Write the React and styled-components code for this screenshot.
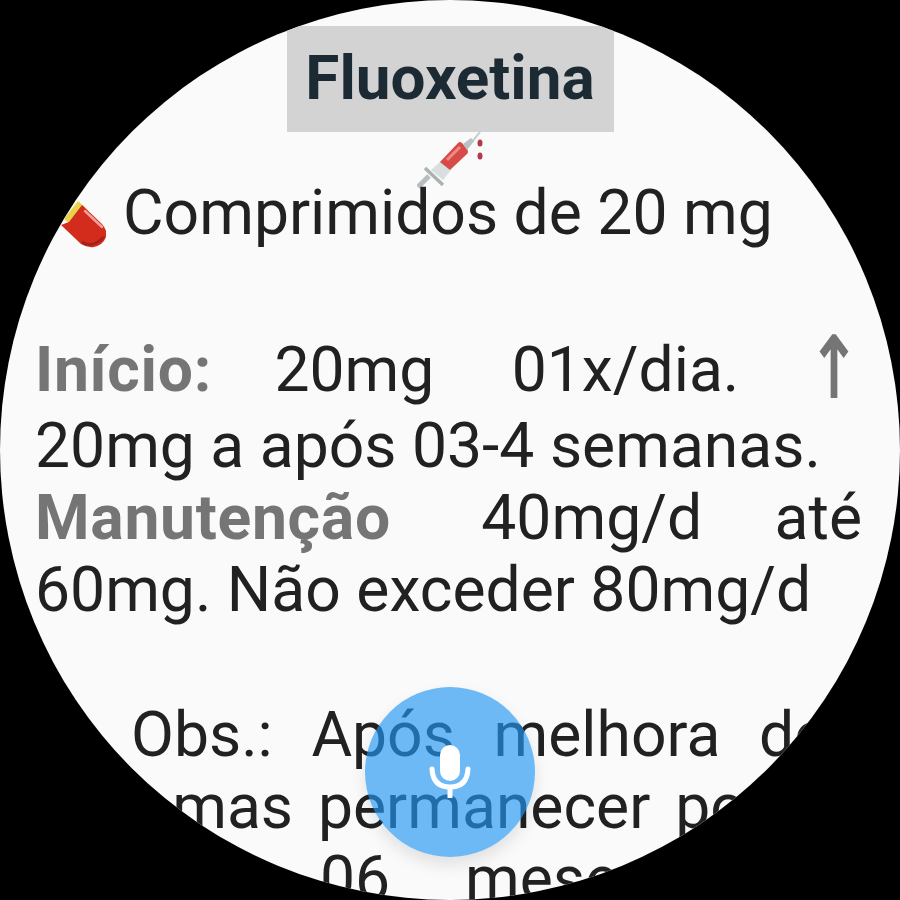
import React from 'react';
import styled, { createGlobalStyle } from 'styled-components';

const GlobalStyle = createGlobalStyle`
  html, body {
    margin: 0;
    padding: 0;
    background: #000;
  }
`;

const Screen = styled.div`
  position: relative;
  width: 900px;
  height: 900px;
  border-radius: 50%;
  overflow: hidden;
  background: #fafafa;
  font-family: Roboto, 'Liberation Sans', sans-serif;
  color: #212121;
`;

const Content = styled.main`
  display: flex;
  flex-direction: column;
  align-items: center;
  padding-top: 26px;
`;

const Title = styled.h1`
  margin: 0;
  width: 327px;
  height: 106px;
  padding-bottom: 3px;
  box-sizing: border-box;
  display: flex;
  align-items: center;
  justify-content: center;
  background: #d3d3d3;
  color: #1c2a33;
  font-size: 62px;
  font-weight: 700;
`;

const Syringe = styled.svg`
  display: block;
  width: 66px;
  height: 60px;
`;

const Dosage = styled.div`
  align-self: flex-start;
  display: flex;
  align-items: center;
  gap: 17px;
  margin: -15px 0 0 60px;
  font-size: 62.4px;
  line-height: 72px;
`;

const Pill = styled.svg`
  display: block;
  width: 46px;
  height: 52px;
  margin-top: 20px;
`;

const Paragraph = styled.p`
  align-self: stretch;
  margin: ${(p) => p.$top}px 38px 0 35px;
  font-size: 62.4px;
  line-height: 72px;
  text-align: justify;
  text-indent: ${(p) => p.$indent || 0}px;
`;

const Strong = styled.b`
  color: #757575;
  font-weight: 700;
  letter-spacing: 0.7px;
  margin-right: ${(p) => p.$after || 0}px;
`;

const Word = styled.span`
  margin-right: ${(p) => p.$after || 0}px;
`;

const Arrow = styled.span`
  display: inline-block;
  margin-right: 2px;
  color: #757575;
  font-family: 'DejaVu Sans', sans-serif;
  font-weight: 400;
  line-height: 80px;
  text-indent: 0;
  -webkit-text-stroke: 1.5px #757575;
  transform: translateY(2px) scaleY(1.35);
  transform-origin: 50% 62%;
`;

const MicButton = styled.button`
  position: absolute;
  left: 365px;
  top: 687px;
  width: 170px;
  height: 170px;
  padding: 0;
  border: 0;
  border-radius: 50%;
  display: flex;
  align-items: center;
  justify-content: center;
  background: rgba(33, 150, 243, 0.65);
  box-shadow: 0 8px 16px rgba(0, 0, 0, 0.1);
`;

const MicIcon = styled.svg`
  display: block;
  width: 42px;
  height: 54px;
`;

export default function App() {
  return (
    <>
      <GlobalStyle />
      <Screen>
        <Content>
          <Title>Fluoxetina</Title>
          <Syringe viewBox="0 0 66 60">
            <path d="M51 15 L63 0" stroke="#c3ccd0" strokeWidth="2" />
            <path d="M1 55 L12 44" stroke="#b7bec0" strokeWidth="5" />
            <path d="M8 36 L26 53" stroke="#aab2b4" strokeWidth="3.5" />
            <path d="M14 38 L24 29 L34 38 L26 48 Z" fill="#d9dee0" />
            <path d="M23 30 L41 11 Q43 9 45 11 L50 17 Q52 20 50 22 L33 38 Z" fill="#d64a48" />
            <path d="M30 28 L43 15" stroke="#ee8a86" strokeWidth="3" />
            <path d="M46 12 L54 6 L57 9 L50 18 Z" fill="#b8c2c4" />
            <ellipse cx="63" cy="11" rx="2.5" ry="3.5" fill="#b33a4a" />
            <ellipse cx="63" cy="24" rx="2.5" ry="3.5" fill="#b33a4a" />
          </Syringe>
          <Dosage>
            <Pill viewBox="0 0 46 52">
              <path d="M4 22 L18 4 L28 13 L14 30 Z" fill="#e8d24a" />
              <path d="M22 8 L42 27 Q48 34 46 40 Q43 48 34 50 Q27 51 21 47 L1 28 L9 25 Z" fill="#d42c1c" />
              <path d="M25 14 L42 30" stroke="#f0a09a" strokeWidth="2.5" strokeLinecap="round" />
              <path d="M22 45 Q32 52 44 40" stroke="#a3231a" strokeWidth="3" fill="none" />
            </Pill>
            <span>Comprimidos de 20 mg</span>
          </Dosage>
          <Paragraph $top={81}>
            <Strong $after={-6}>Início:</Strong> <Word $after={9}>20mg</Word> 01x/dia. <Arrow>↑</Arrow> 20mg a após 03-4 semanas.
            <br />
            <Strong $after={18}>Manutenção</Strong> 40mg/d até 60mg. Não exceder 80mg/d
          </Paragraph>
          <Paragraph $top={73} $indent={96}>
            Obs.: Após melhora dos sintomas permanecer por no mínimo 06 meses após remissão.
          </Paragraph>
        </Content>
        <MicButton aria-label="Falar">
          <MicIcon viewBox="0 0 42 54">
            <rect x="11" y="0" width="20" height="36" rx="10" fill="#fff" />
            <path d="M3 24 Q4 42 21 42 Q38 42 39 24" stroke="#fff" strokeWidth="5" fill="none" strokeLinecap="round" />
            <path d="M21 42 L21 53" stroke="#fff" strokeWidth="5" />
          </MicIcon>
        </MicButton>
      </Screen>
    </>
  );
}
